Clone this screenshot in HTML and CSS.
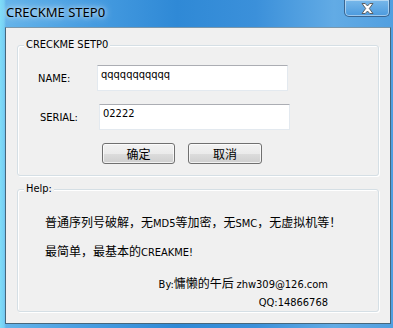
FILE: index.html
```html
<!DOCTYPE html>
<html>
<head>
<meta charset="utf-8">
<title>CRECKME STEP0</title>
<link rel="stylesheet" href="styles.css">
</head>
<body>
<div class="window">
  <div class="titlebar">
    <span class="title">CRECKME STEP0</span>
    <div class="close">
      <svg width="13" height="11" viewBox="0 0 13 11"><polygon points="1,0.5 4.2,0.5 6.5,3 8.8,0.5 12,0.5 8.3,5.5 12,10.5 8.8,10.5 6.5,8 4.2,10.5 1,10.5 4.7,5.5" fill="#fff" stroke="#555" stroke-width="0.9" stroke-linejoin="round"/></svg>
    </div>
  </div>
  <div class="client">
    <div class="group group-main">
      <span class="legend">CRECKME SETP0</span>
      <div class="row row-name"><span class="label">NAME:</span><div class="field">qqqqqqqqqqq</div></div>
      <div class="row row-serial"><span class="label">SERIAL:</span><div class="field">02222</div></div>
      <div class="buttons"><div class="btn btn-ok">确定</div><div class="btn btn-cancel">取消</div></div>
    </div>
    <div class="group group-help">
      <span class="legend">Help:</span>
      <p class="help-line first">普通序列号破解，无<span class="lat">MD5</span>等加密，无<span class="lat">SMC</span>，无虚拟机等！</p>
      <p class="help-line second">最简单，最基本的<span class="lat">CREAKME!</span></p>
      <div class="credits">
        <p class="by"><span class="lat">By:</span>慵懒的午后 <span class="lat">zhw309@126.com</span></p>
        <p class="qq">QQ:14866768</p>
      </div>
    </div>
  </div>
</div>
</body>
</html>
```

FILE: styles.css
```css
html, body {
  margin: 0;
  padding: 0;
}
body {
  width: 393px;
  height: 328px;
  overflow: hidden;
  font-family: "DejaVu Sans Condensed", "DejaVu Sans", "Noto Sans CJK SC", sans-serif;
  font-size: 11px;
  color: #000;
}
.window {
  width: 393px;
  height: 328px;
  box-sizing: border-box;
  background:
    linear-gradient(90deg, rgba(130,225,250,0.9) 0px, rgba(130,225,250,0.6) 4px, rgba(130,225,250,0) 6px),
    linear-gradient(90deg, #66b5ea 0%, #4a9fe2 20%, #2f89d6 45%, #3b90da 65%, #62abe5 85%, #519fe0 100%);
  display: flex;
  flex-direction: column;
}
.titlebar {
  height: 27px;
  display: flex;
  align-items: flex-start;
  justify-content: space-between;
  padding-left: 6px;
  padding-right: 3px;
}
.title {
  font-family: "Noto Sans", sans-serif;
  font-size: 13px;
  line-height: 18px;
  margin-top: 3px;
  color: #000;
  text-shadow: 0 0 8px rgba(255,255,255,0.9), 0 0 4px rgba(255,255,255,0.7);
}
.close {
  width: 46px;
  height: 17px;
  box-sizing: border-box;
  border: 1px solid #3a6590;
  border-top: none;
  border-radius: 0 0 5px 5px;
  background: linear-gradient(#78b8ea, #4b9ade);
  box-shadow: inset 0 0 0 1px rgba(255,255,255,0.45);
  display: flex;
  align-items: center;
  justify-content: center;
}
.close svg {
  display: block;
}
.client {
  margin-left: 5px;
  width: 386px;
  height: 297px;
  box-sizing: border-box;
  border: 1px solid #46677c;
  border-top-color: #7a97ab;
  background: #f0f0f0;
  padding: 17px 11px 11px;
}
.group {
  position: relative;
  border: 1px solid #d5dfe5;
  border-radius: 3px;
  box-shadow: inset 1px 1px 0 #fff, 1px 1px 0 #fff;
}
.legend {
  position: absolute;
  left: 6px;
  top: -8px;
  padding: 0 2px;
  line-height: 14px;
  background: #f0f0f0;
}
.group-main {
  height: 131px;
  box-sizing: border-box;
  padding-top: 19px;
}
.row {
  display: flex;
  align-items: center;
  height: 26px;
}
.row-name {
  padding-left: 20px;
}
.row-serial {
  padding-left: 22px;
  margin-top: 13px;
}
.label {
  width: 59px;
}
.field {
  width: 191px;
  height: 26px;
  box-sizing: border-box;
  background: #fff;
  border: 1px solid #e3e9ef;
  border-top-color: #abadb3;
  padding: 2px 3px 0;
  line-height: 14px;
}
.buttons {
  display: flex;
  gap: 13px;
  padding-left: 84px;
  margin-top: 13px;
}
.btn {
  height: 21px;
  box-sizing: border-box;
  border: 1px solid #707070;
  border-radius: 3px;
  background: linear-gradient(#f2f2f2 0%, #ebebeb 50%, #dddddd 50%, #cfcfcf 100%);
  box-shadow: inset 0 0 0 1px rgba(255,255,255,0.7);
  font-family: "Noto Sans CJK SC", sans-serif;
  font-size: 12px;
  line-height: 19px;
  text-align: center;
}
.btn-ok { width: 73px; }
.btn-cancel { width: 74px; }
.group-help {
  margin-top: 13px;
  height: 123px;
  box-sizing: border-box;
  padding-top: 24px;
}
.help-line {
  margin: 0;
  padding-left: 27px;
  line-height: 16px;
  font-size: 12px;
  font-family: "Noto Sans CJK SC", sans-serif;
}
.lat {
  font-family: "DejaVu Sans Condensed", "DejaVu Sans", sans-serif;
  font-size: 11px;
}
.help-line.second {
  margin-top: 11px;
}
.credits {
  margin-top: 14px;
  padding-right: 50px;
  text-align: right;
}
.credits p {
  margin: 0;
  line-height: 16px;
  font-size: 11px;
}
.credits .by {
  font-size: 12px;
  font-family: "Noto Sans CJK SC", sans-serif;
}
.credits .qq {
  margin-top: 2px;
}
```
